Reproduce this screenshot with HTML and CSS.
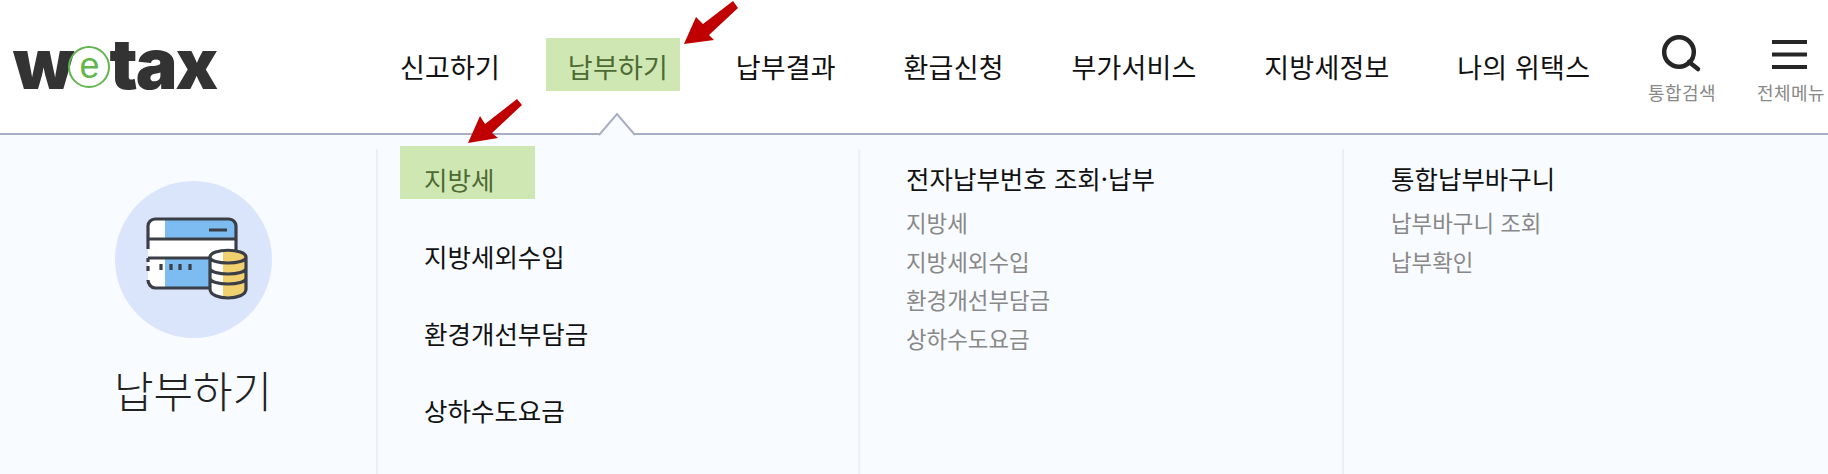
FILE: index.html
```html
<!DOCTYPE html>
<html lang="ko">
<head>
	<meta charset="UTF-8">
	<title>wetax</title>
	<link rel="stylesheet" href="styles.css">
</head>
<body>
	<div class="header">
		<div class="logo">w<span class="logo_e">e</span>tax</div>
		<ul class="nav">
			<li>신고하기</li>
			<li class="on">납부하기</li>
			<li>납부결과</li>
			<li>환급신청</li>
			<li>부가서비스</li>
			<li>지방세정보</li>
			<li>나의 위택스</li>
		</ul>
		<div class="util">
			<div class="util_item">
				<svg class="util_icon" width="40" height="40" viewBox="0 0 40 40">
					<circle cx="17" cy="17" r="14.8" fill="none" stroke="#262626" stroke-width="4.5"/>
					<path d="M27 27l9 7" stroke="#262626" stroke-width="4.5" stroke-linecap="round"/>
				</svg>
				<span>통합검색</span>
			</div>
			<div class="util_item">
				<svg class="util_icon" width="40" height="40" viewBox="0 0 40 40">
					<path d="M1 7h35M1 19.5h35M1 32h35" stroke="#262626" stroke-width="4.2"/>
				</svg>
				<span>전체메뉴</span>
			</div>
		</div>
		<svg class="notch" width="40" height="24" viewBox="0 0 40 24">
			<path d="M1 23L19 2l18 21" fill="#f8fbff" stroke="#a9aec4" stroke-width="2"/>
		</svg>
	</div>
	<div class="panel">
		<div class="side">
			<div class="side_icon">
				<svg width="157" height="157" viewBox="0 0 157 157">
					<rect x="33" y="38" width="88" height="69" rx="7" fill="#fff"/>
					<path d="M50 38h64a7 7 0 0 1 7 7v62H50z" fill="#7cbcf1"/>
					<rect x="33" y="58" width="88" height="19" fill="#fff"/>
					<path d="M33 68V45a7 7 0 0 1 7-7h74a7 7 0 0 1 7 7v32M33 58h88M33 77h88M33 77v4M33 99a8 8 0 0 0 7 8h55M94 49h18" fill="none" stroke="#3a3f47" stroke-width="3.2"/>
					<path d="M33 85v5M46 83v6M56 83v6M65 83v6M75 83v6" stroke="#3a3f47" stroke-width="3.2"/>
					<path d="M95 76c0-9 36-9 36 0v32c0 12-36 12-36 0z" fill="#fff"/>
					<path d="M108 70c8-1 23 0 23 6v32c0 6-12 9-23 8z" fill="#f1d06f"/>
					<path d="M95 76c0-9 36-9 36 0v32c0 12-36 12-36 0zM95 76c0 8 36 8 36 0M95 87c0 8 36 8 36 0M95 97c0 8 36 8 36 0" fill="none" stroke="#3a3f47" stroke-width="3.2"/>
				</svg>
			</div>
			<h2 class="side_title">납부하기</h2>
		</div>
		<div class="col col1">
			<ul class="tabs">
				<li class="on">지방세</li>
				<li>지방세외수입</li>
				<li>환경개선부담금</li>
				<li>상하수도요금</li>
			</ul>
		</div>
		<div class="col col2">
			<h3>전자납부번호 조회·납부</h3>
			<ul class="sub">
				<li>지방세</li>
				<li>지방세외수입</li>
				<li>환경개선부담금</li>
				<li>상하수도요금</li>
			</ul>
		</div>
		<div class="col col3">
			<h3>통합납부바구니</h3>
			<ul class="sub">
				<li>납부바구니 조회</li>
				<li>납부확인</li>
			</ul>
		</div>
	</div>
	<!-- 화살표 -->
	<svg class="arrow arrow1" width="56" height="46" viewBox="0 0 56 46">
		<polygon points="1,44 13,17 20,24 50,1 55,8 26,35 31,40" fill="#c00000"/>
	</svg>
	<svg class="arrow arrow2" width="56" height="46" viewBox="0 0 56 46">
		<polygon points="1,44 13,17 18,25 50,0 55,6 25,34 31,39" fill="#c00000"/>
	</svg>
</body>
</html>
```

FILE: styles.css
```css
*{
	padding:0;
	margin:0;
	box-sizing:border-box;
}
html,body{
	height:100%;
	overflow:hidden;
}
body{
	position:relative;
	background:#fff;
	color:#111;
	font-family:"Noto Sans CJK KR","Noto Sans",sans-serif;
}
ul{
	list-style:none;
}
.header{
	display:flex;
	align-items:flex-start;
	height:135px;
	border-bottom:2px solid #a9aec4;
	padding:0 3px 0 13px;
	position:relative;
}
.logo{
	flex:none;
	width:365px;
	padding-top:19px;
	font-family:"Inter",sans-serif;
	font-size:70px;
	line-height:90px;
	font-weight:900;
	letter-spacing:-2px;
	color:#333;
}
.logo_e{
	display:inline-block;
	width:42px;
	height:42px;
	border:2px solid #62b54f;
	border-radius:50%;
	margin:0 -1px 0 -4px;
	color:#62b54f;
	font-family:"Liberation Sans",sans-serif;
	font-size:36px;
	line-height:35px;
	font-weight:normal;
	letter-spacing:0;
	text-align:center;
	vertical-align:11px;
}
.nav{
	display:flex;
	flex:none;
	gap:33.7px;
	padding-top:38px;
}
.nav>li{
	height:53px;
	line-height:57px;
	padding:0 12px 0 22px;
	font-size:27px;
	letter-spacing:.2px;
	white-space:nowrap;
}
.nav>li.on{
	background:#cfe8b3;
	color:#4d6b33;
}
.util{
	display:flex;
	gap:41px;
	margin-left:auto;
	padding-top:35px;
}
.util_item{
	display:flex;
	flex-direction:column;
	align-items:center;
	width:68px;
	font-size:18px;
	line-height:24px;
	letter-spacing:.4px;
	color:#888;
	white-space:nowrap;
}
.util_icon{
	margin-bottom:5px;
}
.notch{
	position:absolute;
	left:598px;
	top:112px;
}
.panel{
	display:flex;
	height:339px;
	background:#f8fbff;
}
.side{
	width:376px;
	padding:46px 0 0 10px;
	text-align:center;
}
.side_icon{
	width:157px;
	height:157px;
	border-radius:50%;
	background:#dae5fb;
	margin:0 auto;
}
.side_title{
	margin-top:21px;
	font-size:43px;
	line-height:60px;
	font-weight:300;
	color:#222;
}
.col{
	margin-top:14px;
	border-left:2px solid #eceff6;
}
.col1{
	width:482px;
	padding-left:22px;
}
.col2{
	width:484px;
	padding:10px 0 0 46px;
}
.col3{
	flex:1;
	padding:10px 0 0 47px;
}
.tabs{
	margin-top:-3px;
}
.tabs>li{
	width:135px;
	height:53px;
	margin-bottom:24px;
	padding:7px 0 0 24px;
	line-height:51px;
	font-size:25.5px;
	white-space:nowrap;
}
.tabs>li.on{
	background:#cfe8b3;
	color:#4d6b33;
}
.col h3{
	font-size:25.5px;
	line-height:38px;
	font-weight:400;
	color:#111;
}
.sub{
	margin-top:6px;
}
.sub>li{
	font-size:22.4px;
	line-height:38.7px;
	color:#888;
}
.arrow{
	position:absolute;
}
.arrow1{
	left:683px;
	top:0;
}
.arrow2{
	left:467px;
	top:99px;
}
```
